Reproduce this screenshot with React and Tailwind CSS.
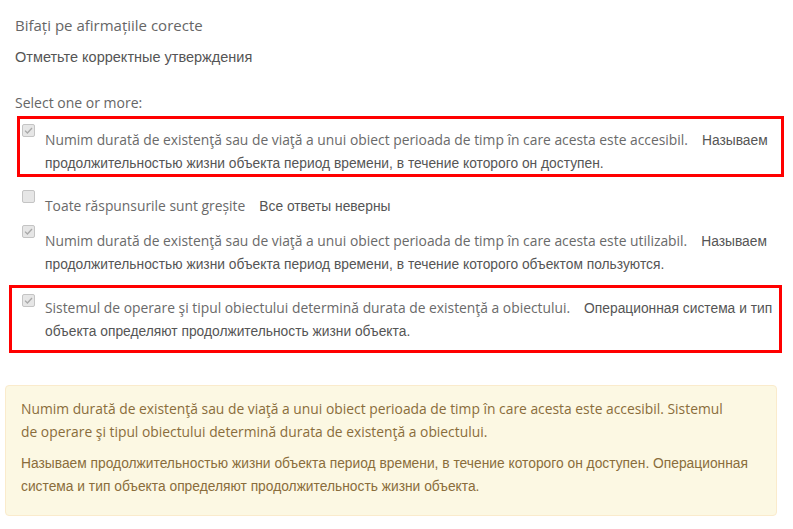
import React from "react";

const lat = "font-['Open_Sans',sans-serif]";
const cyr = "font-['Liberation_Sans',Arial,sans-serif]";

const CheckBox = ({ checked }) => (
  <span className="flex h-[13px] w-[13px] shrink-0 items-center justify-center rounded-[2px] border border-[#c4c4c4] bg-[#e6e6e6]">
    {checked && (
      <svg width="11" height="11" viewBox="0 0 11 11">
        <path d="M2 5.6 L4.4 8 L9 3" fill="none" stroke="#a9a9a9" strokeWidth="1.3" />
      </svg>
    )}
  </span>
);

const options = [
  {
    checked: true,
    wrap: "mt-[4px] ml-[17px] w-[767px] border-[3px] border-[#ff0000] pl-[2px] pt-[2px] pb-0",
    cb: "mt-[3px]",
    pt: "pt-[7px]",
    lines: [
      [
        "Numim durată de existenţă sau de viaţă a unui obiect perioada de timp în care acesta este accesibil.",
        "Называем",
      ],
      [null, "продолжительностью жизни объекта период времени, в течение которого он доступен."],
    ],
  },
  {
    checked: false,
    wrap: "mt-[10px] ml-[22px]",
    cb: "mt-[3px]",
    pt: "pt-[7px]",
    lines: [["Toate răspunsurile sunt greșite", "Все ответы неверны"]],
  },
  {
    checked: true,
    wrap: "mt-[5px] ml-[22px]",
    cb: "mt-[3px]",
    pt: "pt-[7px]",
    lines: [
      [
        "Numim durată de existenţă sau de viaţă a unui obiect perioada de timp în care acesta este utilizabil.",
        "Называем",
      ],
      [null, "продолжительностью жизни объекта период времени, в течение которого объектом пользуются."],
    ],
  },
  {
    checked: true,
    wrap: "mt-[10px] ml-[9px] w-[773px] border-[3px] border-[#ff0000] pl-[10px] pb-[8px]",
    cb: "mt-[6px]",
    pt: "pt-[8px]",
    lines: [
      [
        "Sistemul de operare şi tipul obiectului determină durata de existenţă a obiectului.",
        "Операционная система и тип",
      ],
      [null, "объекта определяют продолжительность жизни объекта."],
    ],
  },
];

const Option = ({ opt }) => (
  <div className={`flex items-start ${opt.wrap}`}>
    <div className={opt.cb}>
      <CheckBox checked={opt.checked} />
    </div>
    <div className={`ml-[10px] ${opt.pt}`}>
      {opt.lines.map((ln, i) => (
        <div key={i} className="h-[23px] whitespace-nowrap leading-[23px]">
          {ln[0] && <span className={`${lat} text-[13.85px] text-[#6a6a6a]`}>{ln[0]}</span>}
          {ln[0] && <span className="inline-block w-[14px]" />}
          <span className={`${cyr} text-[13.8px] text-[#555]`}>{ln[1]}</span>
        </div>
      ))}
    </div>
  </div>
);

export default function App() {
  return (
    <div className="h-[529px] w-[793px] overflow-hidden bg-white">
      <div className="px-[15px] pt-[15px]">
        <p className={`${lat} text-[15px] leading-[20px] text-[#666]`}>Bifați pe afirmațiile corecte</p>
        <p className={`${cyr} mt-[12px] text-[14.5px] leading-[20px] text-[#555]`}>
          Отметьте корректные утверждения
        </p>
        <p className={`${lat} mt-[27px] text-[14px] leading-[18px] text-[#666]`}>Select one or more:</p>
      </div>

      {options.map((opt, i) => (
        <Option key={i} opt={opt} />
      ))}

      <div className="ml-[5px] mt-[32px] w-[772px] rounded-[4px] border border-[#faebcc] bg-[#fcf8e3] px-[15px] pt-[11px] pb-[17px] leading-[23px] text-[#8a6d3b]">
        <div className={`${lat} text-[13.85px]`}>
          <div className="whitespace-nowrap">
            Numim durată de existenţă sau de viaţă a unui obiect perioada de timp în care acesta este accesibil. Sistemul
          </div>
          <div className="whitespace-nowrap">
            de operare şi tipul obiectului determină durata de existenţă a obiectului.
          </div>
        </div>
        <div className={`${cyr} mt-[9px] text-[13.8px]`}>
          <div className="whitespace-nowrap">
            Называем продолжительностью жизни объекта период времени, в течение которого он доступен. Операционная
          </div>
          <div className="whitespace-nowrap">система и тип объекта определяют продолжительность жизни объекта.</div>
        </div>
      </div>
    </div>
  );
}
